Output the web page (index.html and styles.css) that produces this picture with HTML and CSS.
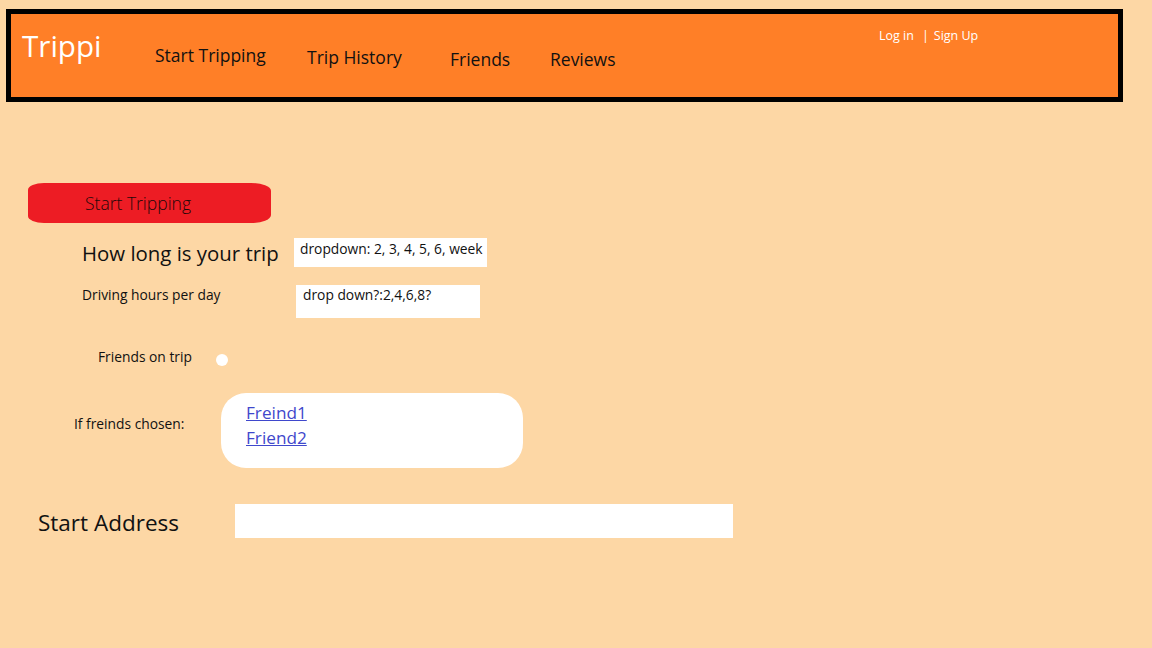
FILE: index.html
```html
<!DOCTYPE html>
<html lang="en">
<head>
<meta charset="utf-8">
<title>Trippi</title>
<link rel="stylesheet" href="styles.css">
</head>
<body>
<header class="topbar">
  <div class="brand">Trippi</div>
  <a class="nav nav-1" href="#">Start Tripping</a>
  <a class="nav nav-2" href="#">Trip History</a>
  <a class="nav nav-3" href="#">Friends</a>
  <a class="nav nav-4" href="#">Reviews</a>
  <div class="auth"><a href="#">Log in</a><span class="sep">|</span><a href="#">Sign Up</a></div>
</header>
<main class="content">
  <button class="start-btn">Start Tripping</button>
  <div class="row row-length">
    <label class="label-lg">How long is your trip</label>
    <div class="field field-length">dropdown: 2, 3, 4, 5, 6, week</div>
  </div>
  <div class="row row-hours">
    <label class="label-sm">Driving hours per day</label>
    <div class="field field-hours">drop down?:2,4,6,8?</div>
  </div>
  <div class="row row-friends">
    <label class="label-sm">Friends on trip</label>
    <span class="radio"></span>
  </div>
  <div class="row row-chosen">
    <label class="label-sm">If freinds chosen:</label>
    <div class="friend-box">
      <a href="#">Freind1</a>
      <a href="#">Friend2</a>
    </div>
  </div>
  <div class="row row-address">
    <label class="label-xl">Start Address</label>
    <div class="field field-address"></div>
  </div>
</main>
</body>
</html>
```

FILE: styles.css
```css
* { box-sizing: border-box; }
html, body { margin: 0; padding: 0; }
body {
  background: #fdd7a5;
  font-family: "Open Sans", "Noto Sans", sans-serif;
  color: #111;
  width: 1152px;
  height: 648px;
  overflow: hidden;
}
.topbar {
  margin: 9px 0 0 6px;
  width: 1117px;
  height: 93px;
  border: 5px solid #000;
  background: #ff7f27;
  display: grid;
  grid-template-columns: 144px 152px 143px 100px 329px auto;
  align-items: start;
}
.brand {
  color: #fff;
  font-size: 29.6px;
  line-height: 36px;
  margin: 14px 0 0 11px;
}
.nav {
  color: #111;
  text-decoration: none;
  font-size: 17.5px;
  line-height: 24px;
}
.nav-1 { margin-top: 29px; }
.nav-2 { margin-top: 31px; }
.nav-3 { margin-top: 33px; }
.nav-4 { margin-top: 33px; }
.auth {
  margin-top: 13px;
  font-size: 12.5px;
  line-height: 18px;
  color: #fff;
}
.auth a { color: #fff; text-decoration: none; }
.auth .sep { margin: 0 5px 0 8px; }
.content { display: flex; flex-direction: column; align-items: flex-start; }
.start-btn {
  margin: 81px 0 0 28px;
  width: 243px;
  height: 40px;
  border: none;
  border-radius: 16px 20px 20px 16px / 7px 8px 8px 7px;
  background: #ed1c24;
  color: #1e0808;
  font-family: inherit;
  font-weight: 300;
  font-size: 17.5px;
  text-align: left;
  padding: 0 0 0 57px;
  line-height: 24px;
}
.row { display: grid; align-items: start; }
.label-lg { font-size: 20.4px; line-height: 28px; }
.label-sm { font-size: 13.8px; line-height: 20px; }
.label-xl { font-size: 22.5px; line-height: 30px; }
.field { background: #fff; font-size: 13.8px; line-height: 20px; color: #111; }
.row-length { margin-top: 15px; padding-left: 82px; grid-template-columns: 212px 193px; }
.row-length .label-lg { margin-top: 1px; }
.field-length { height: 29px; padding: 1px 0 0 6px; white-space: nowrap; }
.row-hours { margin-top: 18px; padding-left: 82px; grid-template-columns: 214px 184px; }
.field-hours { height: 33px; padding: 0 0 0 7px; }
.row-friends { margin-top: 28px; padding-left: 98px; grid-template-columns: 118px 12px; }
.row-friends .label-sm { margin-top: 1px; }
.radio { display: block; width: 12px; height: 12px; border-radius: 50%; background: #fff; margin-top: 8px; }
.row-chosen { margin-top: 26px; padding-left: 74px; grid-template-columns: 147px 302px; }
.row-chosen .label-sm { margin-top: 21px; }
.friend-box {
  height: 75px;
  background: #fff;
  border-radius: 25px;
  padding: 7px 0 0 25px;
  display: flex;
  flex-direction: column;
  align-items: flex-start;
}
.friend-box a { color: #3f48cc; font-size: 17.2px; line-height: 25px; }
.row-address { margin-top: 36px; padding-left: 38px; grid-template-columns: 197px 498px; }
.row-address .label-xl { margin-top: 4px; }
.field-address { height: 34px; }
```
